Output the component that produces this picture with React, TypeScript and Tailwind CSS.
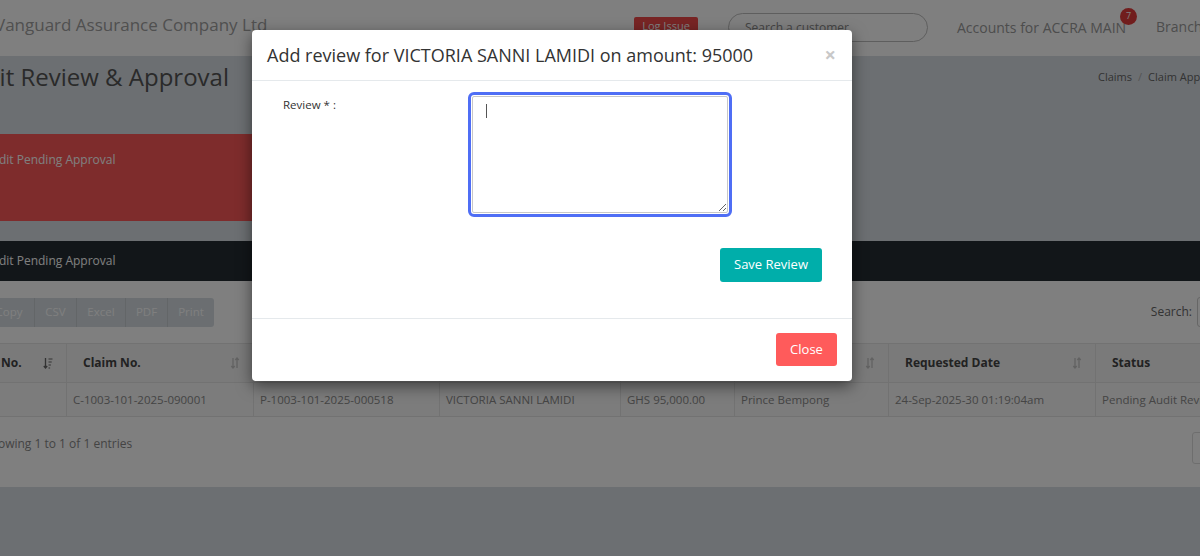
import React from 'react';

const font = "font-['Open_Sans',sans-serif]";

const SortIcon: React.FC<{ active?: boolean }> = ({ active }) =>
  active ? (
    <svg width="10" height="12" viewBox="0 0 10 12" className="text-[#666]">
      <path d="M2.5 1v10M0.8 9l1.7 2 1.7-2" fill="none" stroke="currentColor" strokeWidth="1.3" />
      <path d="M5.5 2h4M5.5 5h3.2M5.5 8h2.4M5.5 11h1.6" fill="none" stroke="currentColor" strokeWidth="1.2" />
    </svg>
  ) : (
    <svg width="10" height="12" viewBox="0 0 10 12" className="text-[#c4c4c4]">
      <path d="M3 1v10M1.3 9l1.7 2 1.7-2" fill="none" stroke="currentColor" strokeWidth="1.3" />
      <path d="M7 11V1M5.3 3L7 1l1.7 2" fill="none" stroke="currentColor" strokeWidth="1.3" />
    </svg>
  );

const columns = [
  { label: 'No.', width: 82, active: true },
  { label: 'Claim No.', width: 187 },
  { label: 'Policy No.', width: 186 },
  { label: 'Client Name', width: 181 },
  { label: 'Amount', width: 114 },
  { label: 'Requested By', width: 154 },
  { label: 'Requested Date', width: 207 },
  { label: 'Status', width: 200 },
  { label: 'Action', width: 102 },
];

const row = [
  '1',
  'C-1003-101-2025-090001',
  'P-1003-101-2025-000518',
  'VICTORIA SANNI LAMIDI',
  'GHS 95,000.00',
  'Prince Bempong',
  '24-Sep-2025-30 01:19:04am',
  'Pending Audit Review',
  '',
];

const exportButtons = [
  { label: 'Copy', width: 50 },
  { label: 'CSV', width: 42 },
  { label: 'Excel', width: 49 },
  { label: 'PDF', width: 42 },
  { label: 'Print', width: 47 },
];

const App: React.FC = () => {
  return (
    <div className={`${font} relative h-[556px] w-[1200px] overflow-hidden bg-[#d8dee4]`}>
      {/* top navbar */}
      <div className="flex h-[56px] w-[1400px] items-center bg-white">
        <div className="-ml-[5px] w-[639px] shrink-0 pb-[6px] text-[17px] text-[#a0a0a0]">
          Vanguard Assurance Company Ltd
        </div>
        <div className="mt-[17px] flex h-[18px] w-[64px] shrink-0 items-center justify-center self-start rounded-[2px] bg-[#f04a4a] text-[11px] text-white">
          Log Issue
        </div>
        <div className="ml-[30px] mt-[13px] flex h-[29px] w-[200px] shrink-0 items-center self-start rounded-full border border-[#bdbdbd] pl-[16px] text-[12px] text-[#8a8a8a]">
          Search a customer
        </div>
        <div className="ml-[29px] w-[199px] shrink-0 pb-[3px]">
          <span className="relative text-[14px] text-[#9a9a9a]">
            Accounts for ACCRA MAIN
            <span className="absolute -top-[10px] left-[163px] flex h-[17px] w-[17px] items-center justify-center rounded-full bg-[#e23b3b] text-[9px] text-white">
              7
            </span>
          </span>
        </div>
        <div className="shrink-0 pb-[3px] text-[14px] text-[#9a9a9a]">Branch: ACCRA MAIN</div>
      </div>

      <div className="-ml-[42px] w-[1465px]">
        {/* page title */}
        <div className="flex h-[78px] items-start">
          <div className="-ml-[3px] w-[1143px] shrink-0 pt-[5px] text-[24px] leading-[32px] text-[#555]">
            Audit Review &amp; Approval
          </div>
          <div className="flex items-center gap-[6px] pt-[13px] text-[11px] text-[#666]">
            <span>Claims</span>
            <span className="text-[#aaa]">/</span>
            <span>Claim Approval</span>
          </div>
        </div>

        {/* summary card */}
        <div className="h-[87px] w-[320px] bg-[#fc5858] pl-[26px] pt-[17px] text-[12px] text-white">
          Audit Pending Approval
        </div>

        {/* section bar */}
        <div className="mt-[20px] flex h-[40px] items-center bg-[#242c32] pl-[26px] text-[12px] text-white">
          Audit Pending Approval
        </div>

        {/* table card */}
        <div className="h-[206px] bg-white pl-[26px] pr-[26px] pt-[16px]">
          <div className="flex items-center justify-between">
            <div className="flex h-[29px]">
              {exportButtons.map((b, i) => (
                <div
                  key={b.label}
                  style={{ width: b.width }}
                  className={`flex items-center justify-center bg-[#d6dde3] text-[11.5px] text-white ${
                    i > 0 ? 'border-l border-[#c6ccd1]' : 'rounded-l-[3px]'
                  } ${i === exportButtons.length - 1 ? 'rounded-r-[3px]' : ''}`}
                >
                  {b.label}
                </div>
              ))}
            </div>
            <div className="flex items-center gap-[5px] text-[12px] text-[#666]">
              <span>Search:</span>
              <div className="h-[30px] w-[200px] rounded-[3px] border border-[#ccc] bg-white" />
            </div>
          </div>

          <table className="mt-[16px] table-fixed border-collapse" style={{ width: 1413 }}>
            <colgroup>
              {columns.map((c) => (
                <col key={c.label} style={{ width: c.width }} />
              ))}
            </colgroup>
            <thead>
              <tr className="h-[39px] border-y border-[#e4e4e4] bg-[#f4f4f4]">
                {columns.map((c) => (
                  <th
                    key={c.label}
                    className="border-x border-[#e4e4e4] pl-[16px] pr-[13px] text-left text-[12px] font-bold text-[#444]"
                  >
                    <div className="flex items-center justify-between">
                      <span>{c.label}</span>
                      <SortIcon active={c.active} />
                    </div>
                  </th>
                ))}
              </tr>
            </thead>
            <tbody>
              <tr className="h-[34px] border-b border-[#e4e4e4] bg-[#f8f8f8]">
                {row.map((v, i) => (
                  <td
                    key={i}
                    className="whitespace-nowrap border-x border-[#e4e4e4] pl-[6px] text-[11.5px] text-[#8a8a8a]"
                  >
                    {v}
                  </td>
                ))}
              </tr>
            </tbody>
          </table>

          <div className="mt-[15px] flex items-start justify-between">
            <div className="pt-[3px] text-[12px] text-[#888]">Showing 1 to 1 of 1 entries</div>
            <div className="flex h-[32px] w-[205px] items-center rounded-l-[3px] border border-[#ddd] pl-[10px] text-[12px] text-[#999]">
              Previous
            </div>
          </div>
        </div>
      </div>

      {/* modal backdrop */}
      <div className="absolute inset-0 bg-black/50" />

      {/* modal */}
      <div className="absolute left-[252px] top-[30px] w-[600px] rounded-[4px] bg-white shadow-[0_5px_15px_rgba(0,0,0,0.5)]">
        <div className="flex h-[51px] items-center justify-between border-b border-[#e5e9ec] px-[15px]">
          <h4 className="text-[18px] text-[#333]">Add review for VICTORIA SANNI LAMIDI on amount: 95000</h4>
          <span className="mr-[1px] text-[20px] font-bold leading-none text-[#c8c8c8]">×</span>
        </div>
        <div className="px-[15px] pb-[36px] pt-[15px]">
          <div className="flex items-start">
            <label className="w-[205px] shrink-0 pl-[16px] text-[11.5px] text-[#333]">Review * :</label>
            <div className="relative">
              <textarea
                className="block h-[117px] w-[256px] rounded-[2px] border border-[#c8c8c8] outline-3 outline-offset-[1px] outline-[#4f6ef5]"
                defaultValue=""
              />
              <span className="absolute left-[14px] top-[8px] h-[14px] w-[1px] bg-[#555]" />
            </div>
          </div>
          <div className="mt-[35px] flex justify-end pr-[15px]">
            <button className="h-[34px] w-[102px] rounded-[3px] bg-[#00aeaa] text-[13px] text-white">
              Save Review
            </button>
          </div>
        </div>
        <div className="flex justify-end border-t border-[#e5e9ec] px-[15px] pb-[15px] pt-[14px]">
          <button className="h-[33px] w-[61px] rounded-[3px] bg-[#ff5b5b] text-[13px] text-white">Close</button>
        </div>
      </div>
    </div>
  );
};

export default App;
